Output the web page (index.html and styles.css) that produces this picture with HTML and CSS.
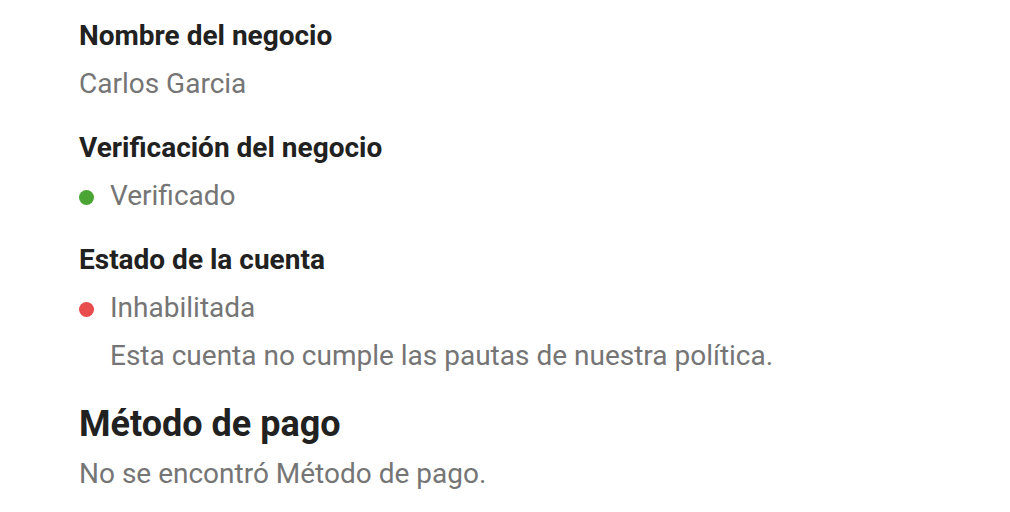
FILE: index.html
```html
<!DOCTYPE html>
<html lang="es">
<head>
<meta charset="utf-8">
<link rel="stylesheet" href="styles.css">
</head>
<body>
<main class="page">
  <section class="field">
    <h3 class="label">Nombre del negocio</h3>
    <p class="value">Carlos Garcia</p>
  </section>
  <section class="field">
    <h3 class="label">Verificación del negocio</h3>
    <p class="value status"><span class="dot dot-green"></span>Verificado</p>
  </section>
  <section class="field">
    <h3 class="label">Estado de la cuenta</h3>
    <p class="value status"><span class="dot dot-red"></span>Inhabilitada</p>
    <p class="value note">Esta cuenta no cumple las pautas de nuestra política.</p>
  </section>
  <section class="payment">
    <h2 class="title">Método de pago</h2>
    <p class="value">No se encontró Método de pago.</p>
  </section>
</main>
</body>
</html>
```
FILE: styles.css
```css
* { box-sizing: border-box; }
html, body { margin: 0; padding: 0; background: #ffffff; }
body { font-family: Roboto, "Noto Sans", sans-serif; }
.page { padding: 12px 0 0 79px; }
.field { margin: 0 0 16px 0; }
.field:last-of-type { margin-bottom: 0; }
.label { margin: 0; font-size: 28px; line-height: 48px; font-weight: 700; color: #212121; }
.value { margin: 0; font-size: 28px; line-height: 48px; font-weight: 400; color: #757575; }
.status { display: flex; align-items: center; }
.dot { width: 15px; height: 15px; border-radius: 50%; margin: 2px 16px 0 0; flex: none; }
.dot-green { background: #4aa534; }
.dot-red { background: #e84c4c; }
.note { padding-left: 31px; }
.payment { margin-top: 20px; }
.title { margin: 0 0 2px 0; font-size: 36px; line-height: 48px; font-weight: 700; color: #212121; }
```
